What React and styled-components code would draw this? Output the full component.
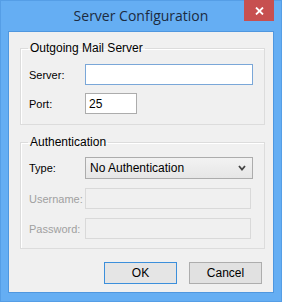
import styled, { createGlobalStyle } from 'styled-components';

const Global = createGlobalStyle`
  body {
    margin: 0;
    font-family: "Liberation Sans", Arial, sans-serif;
  }
`;

const Frame = styled.div`
  width: 282px;
  height: 302px;
  box-sizing: border-box;
  background: #65aef3;
  border: 1px solid #559ee6;
  display: flex;
  flex-direction: column;
`;

const TitleBar = styled.div`
  height: 30px;
  position: relative;
  display: flex;
  align-items: center;
  justify-content: center;
  font-family: "Open Sans", "Noto Sans", sans-serif;
  font-size: 14px;
  color: #1c2b3f;
  padding-bottom: 1px;
  box-sizing: border-box;
`;

const CloseButton = styled.div`
  position: absolute;
  top: -1px;
  right: 7px;
  width: 30px;
  height: 21px;
  background: #c75050;
  display: flex;
  align-items: center;
  justify-content: center;
`;

const Client = styled.div`
  margin: 0 7px 8px 7px;
  flex: 1;
  background: #f0f0f0;
  border: 1px solid #4f97df;
  padding: 9px 9px 0 11px;
  display: flex;
  flex-direction: column;
`;

const Group = styled.fieldset`
  margin: 0 0 ${(p) => p.$gap || 0}px 0;
  width: 245px;
  box-sizing: border-box;
  border: 1px solid #dcdcdc;
  box-shadow: inset 1px 1px 0 #fff;
  padding: ${(p) => p.$top}px 8px ${(p) => p.$bottom}px 8px;
  display: flex;
  flex-direction: column;
  gap: ${(p) => p.$rowGap || 8}px;
  font-size: 12px;
  color: #000;

  legend {
    padding: 0 2px 0 2px;
    margin-left: -1px;
    line-height: 14px;
    font-size: 12px;
  }
`;

const Row = styled.div`
  display: flex;
  align-items: center;
  height: ${(p) => p.$h || 21}px;
`;

const Label = styled.span`
  width: 56px;
  flex-shrink: 0;
  white-space: nowrap;
  font-size: 11px;
  color: ${(p) => (p.$disabled ? '#a0a0a0' : '#000')};
`;

const Input = styled.div`
  box-sizing: border-box;
  width: ${(p) => p.$w}px;
  height: 21px;
  border: 1px solid ${(p) => (p.$focus ? '#7aa7d8' : p.$disabled ? '#d9d9d9' : '#acacac')};
  background: ${(p) => (p.$disabled ? '#f0f0f0' : '#fff')};
  padding: 0 3px;
  display: flex;
  align-items: center;
  font-size: 12px;
`;

const Select = styled.div`
  box-sizing: border-box;
  width: 168px;
  height: 22px;
  border: 1px solid #acacac;
  background: linear-gradient(#f2f2f2, #e6e6e6);
  padding: 0 6px 0 4px;
  display: flex;
  align-items: center;
  justify-content: space-between;
  font-size: 12px;
`;

const Buttons = styled.div`
  display: flex;
  justify-content: flex-end;
  gap: 12px;
  padding-right: 2px;
`;

const Button = styled.div`
  box-sizing: border-box;
  width: 73px;
  height: 22px;
  border: 1px solid ${(p) => (p.$default ? '#3c8fdb' : '#adadad')};
  background: ${(p) => (p.$default ? '#e5e5e5' : '#e1e1e1')};
  display: flex;
  align-items: center;
  justify-content: center;
  font-size: 12px;
  color: #000;
`;

export default function App() {
  return (
    <>
      <Global />
      <Frame>
        <TitleBar>
          Server Configuration
          <CloseButton>
            <svg width="9" height="8" viewBox="0 0 9 8">
              <path d="M1 0.5 L8 7.5 M8 0.5 L1 7.5" stroke="#fff" strokeWidth="1.8" />
            </svg>
          </CloseButton>
        </TitleBar>
        <Client>
          <Group $top={9} $bottom={10} $gap={10}>
            <legend>Outgoing Mail Server</legend>
            <Row>
              <Label>Server:</Label>
              <Input $w={168} $focus />
            </Row>
            <Row>
              <Label>Port:</Label>
              <Input $w={52}>25</Input>
            </Row>
          </Group>
          <Group $top={8} $bottom={9} $gap={13} $rowGap={9}>
            <legend>Authentication</legend>
            <Row $h={22}>
              <Label>Type:</Label>
              <Select>
                No Authentication
                <svg width="8" height="6" viewBox="0 0 8 6">
                  <path d="M1 1 L4 4.5 L7 1" stroke="#444" strokeWidth="1.8" fill="none" />
                </svg>
              </Select>
            </Row>
            <Row>
              <Label $disabled>Username:</Label>
              <Input $w={166} $disabled />
            </Row>
            <Row>
              <Label $disabled>Password:</Label>
              <Input $w={166} $disabled />
            </Row>
          </Group>
          <Buttons>
            <Button $default>OK</Button>
            <Button>Cancel</Button>
          </Buttons>
        </Client>
      </Frame>
    </>
  );
}
